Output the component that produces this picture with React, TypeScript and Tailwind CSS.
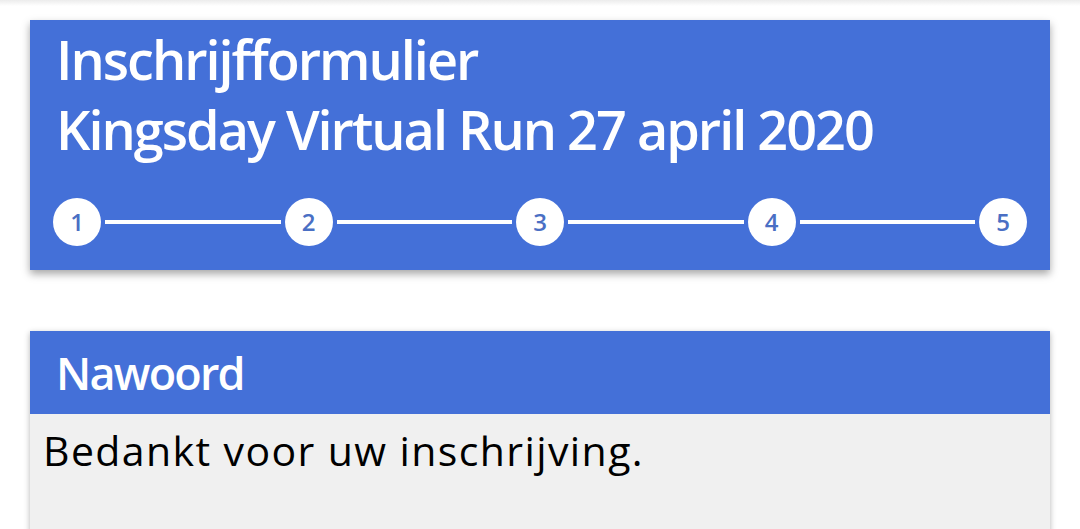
export default function App() {
  const steps = [1, 2, 3, 4, 5];
  return (
    <div className="min-h-[529px] bg-white font-['Open_Sans',sans-serif] overflow-hidden">
      <div className="h-[6px] bg-gradient-to-b from-[#ececec] to-white" />
      <div className="px-[30px] pt-[14px]">
        {/* Header card */}
        <div className="bg-[#4470d8] text-white shadow-[0_4px_8px_rgba(0,0,0,0.35)] px-[26px] pt-[4px] pb-[24px]">
          <h1 className="text-[54px] font-semibold leading-[70px] tracking-[-2px]">
            Inschrijfformulier
            <br />
            Kingsday Virtual Run 27 april 2020
          </h1>
          <div className="flex items-center mt-[34px] -mx-[3px]">
            {steps.map((n, i) => (
              <div key={n} className={i < steps.length - 1 ? 'flex items-center flex-1' : 'flex items-center'}>
                <div className="w-[48px] h-[48px] rounded-full bg-white text-[#4a6fc4] flex items-center justify-center text-[24px] font-semibold shrink-0">
                  {n}
                </div>
                {i < steps.length - 1 && <div className="flex-1 h-[4px] bg-white mx-[4px]" />}
              </div>
            ))}
          </div>
        </div>

        {/* Nawoord card */}
        <div className="mt-[61px] shadow-[0_2px_6px_rgba(0,0,0,0.3)]">
          <div className="bg-[#4470d8] text-white h-[83px] px-[26px] flex items-center">
            <h2 className="text-[45px] font-semibold leading-none tracking-[-1.8px]">Nawoord</h2>
          </div>
          <div className="bg-[#f0f0f0] px-[13px] pt-[8px] h-[140px]">
            <p className="text-[41px] leading-[56px] tracking-[1.4px] text-black">Bedankt voor uw inschrijving.</p>
          </div>
        </div>
      </div>
    </div>
  );
}
